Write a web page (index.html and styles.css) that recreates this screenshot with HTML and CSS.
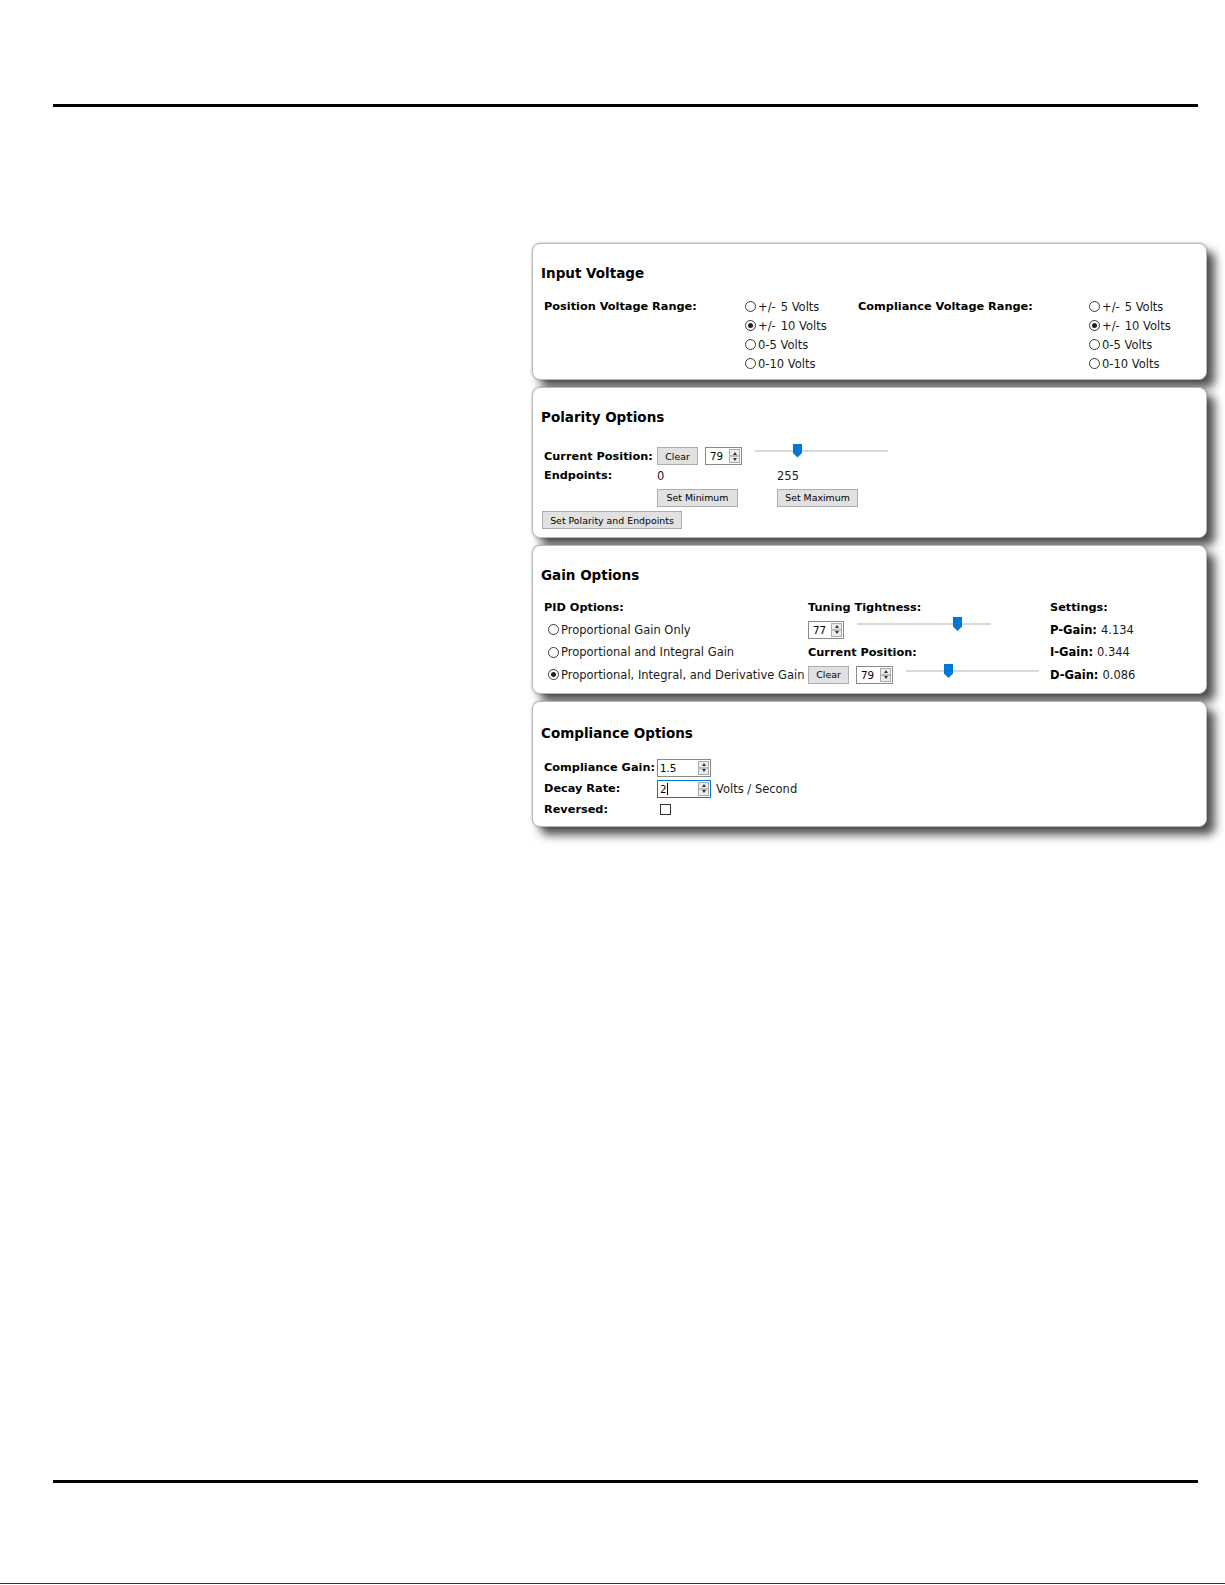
FILE: index.html
```html
<!DOCTYPE html>
<html lang="en">
<head>
    <meta charset="UTF-8">
    <meta name="viewport" content="width=device-width, initial-scale=1.0">
    <title>Controller Settings</title>
    <link rel="stylesheet" href="styles.css">
</head>
<body>
    <div class="page">
        <div class="rule"></div>

        <div class="figure">
            <!-- Input Voltage -->
            <div class="panel panel-input">
                <h2>Input Voltage</h2>
                <div class="range-grid">
                    <div class="label">Position Voltage Range:</div>
                    <div class="radios">
                        <div class="opt"><span class="radio"></span><span class="pm">+/-</span>5 Volts</div>
                        <div class="opt"><span class="radio on"></span><span class="pm">+/-</span>10 Volts</div>
                        <div class="opt"><span class="radio"></span>0-5 Volts</div>
                        <div class="opt"><span class="radio"></span>0-10 Volts</div>
                    </div>
                    <div class="label">Compliance Voltage Range:</div>
                    <div class="radios">
                        <div class="opt"><span class="radio"></span><span class="pm">+/-</span>5 Volts</div>
                        <div class="opt"><span class="radio on"></span><span class="pm">+/-</span>10 Volts</div>
                        <div class="opt"><span class="radio"></span>0-5 Volts</div>
                        <div class="opt"><span class="radio"></span>0-10 Volts</div>
                    </div>
                </div>
            </div>

            <!-- Polarity Options -->
            <div class="panel panel-polarity">
                <h2>Polarity Options</h2>
                <div class="polarity-grid">
                    <div class="label">Current Position:</div>
                    <div class="controls span2">
                        <button class="btn btn-clear">Clear</button>
                        <span class="num num-pos"><span class="val">79</span><span class="spin"><i class="up"></i><i class="down"></i></span></span>
                        <span class="slider slider-pol"><span class="thumb" style="left: 38px"></span></span>
                    </div>
                    <div class="label">Endpoints:</div>
                    <div class="text">0</div>
                    <div class="text">255</div>
                    <div></div>
                    <div><button class="btn btn-end">Set Minimum</button></div>
                    <div><button class="btn btn-end">Set Maximum</button></div>
                    <div class="span3 submit-row"><button class="btn btn-submit">Set Polarity and Endpoints</button></div>
                </div>
            </div>

            <!-- Gain Options -->
            <div class="panel panel-gain">
                <h2>Gain Options</h2>
                <div class="gain-grid">
                    <div class="label">PID Options:</div>
                    <div class="label">Tuning Tightness:</div>
                    <div class="label">Settings:</div>

                    <div class="opt pid"><span class="radio"></span>Proportional Gain Only</div>
                    <div class="controls">
                        <span class="num num-tune"><span class="val">77</span><span class="spin"><i class="up"></i><i class="down"></i></span></span>
                        <span class="slider slider-tune"><span class="thumb" style="left: 96px"></span></span>
                    </div>
                    <div class="text"><b>P-Gain:</b> 4.134</div>

                    <div class="opt pid"><span class="radio"></span>Proportional and Integral Gain</div>
                    <div class="label">Current Position:</div>
                    <div class="text"><b>I-Gain:</b> 0.344</div>

                    <div class="opt pid"><span class="radio on"></span>Proportional, Integral, and Derivative Gain</div>
                    <div class="controls">
                        <button class="btn btn-clear">Clear</button>
                        <span class="num num-pos"><span class="val">79</span><span class="spin"><i class="up"></i><i class="down"></i></span></span>
                        <span class="slider slider-cur"><span class="thumb" style="left: 38px"></span></span>
                    </div>
                    <div class="text"><b>D-Gain:</b> 0.086</div>
                </div>
            </div>

            <!-- Compliance Options -->
            <div class="panel panel-compliance">
                <h2>Compliance Options</h2>
                <div class="compliance-grid">
                    <div class="label">Compliance Gain:</div>
                    <div class="controls">
                        <span class="num num-wide"><span class="val">1.5</span><span class="spin"><i class="up"></i><i class="down"></i></span></span>
                    </div>
                    <div class="label">Decay Rate:</div>
                    <div class="controls">
                        <span class="num num-wide focused"><span class="val caret">2</span><span class="spin"><i class="up"></i><i class="down"></i></span></span>
                        <span class="text unit">Volts / Second</span>
                    </div>
                    <div class="label">Reversed:</div>
                    <div class="controls"><span class="checkbox"></span></div>
                </div>
            </div>
        </div>

        <div class="rule rule-bottom"></div>
        <div class="page-edge"></div>
    </div>
</body>
</html>
```

FILE: styles.css
```css
* { margin: 0; padding: 0; box-sizing: border-box; }
body { font-family: "DejaVu Sans", Verdana, sans-serif; background: #fff; color: #1a1a1a; }
.page { width: 1225px; padding-top: 104px; }
.rule { margin-left: 53px; width: 1145px; height: 3px; background: #000; }
.rule-bottom { margin-top: 653px; }
.page-edge { margin-top: 100px; height: 1px; background: #333; }

.figure { margin: 136px 0 0 532px; width: 675px; display: flex; flex-direction: column; gap: 7px; }
.panel { background: #fff; border: 1px solid #b8b8b8; border-radius: 8px; padding: 21px 0 0 8px; box-shadow: 0 0 3px rgba(0,0,0,0.25), 8px 8px 10px rgba(0,0,0,0.68); }
.panel h2 { font-size: 13.5px; line-height: 16px; font-weight: bold; color: #000; }
.panel-input { height: 137px; }
.panel-polarity { height: 151px; }
.panel-gain { height: 149px; }
.panel-compliance { height: 126px; }
.panel-compliance h2 { margin-top: 2px; }

.label { font-size: 11.3px; font-weight: bold; color: #000; white-space: nowrap; display: flex; align-items: center; }
.text { font-size: 11.5px; white-space: nowrap; display: flex; align-items: center; }
.text b { color: #000; margin-right: 4px; }
.controls { display: flex; align-items: center; }

/* radios */
.opt { display: flex; align-items: center; font-size: 11.5px; white-space: nowrap; }
.pm { margin-right: 5px; }
.radio { width: 11px; height: 11px; border: 1px solid #3a3a3a; border-radius: 50%; margin-right: 2px; display: flex; align-items: center; justify-content: center; background: #fff; }
.radio.on::after { content: ""; width: 5px; height: 5px; border-radius: 50%; background: #222; }

/* input voltage */
.range-grid { display: grid; grid-template-columns: 201px 113px 231px auto; margin-top: 16px; padding-left: 3px; }
.range-grid .label { height: 19px; align-self: start; }
.radios .opt { height: 19px; }

/* buttons */
.btn { font-family: "DejaVu Sans", Verdana, sans-serif; font-size: 9.4px; color: #000; background: #e1e1e1; border: 1px solid #adadad; height: 18px; padding: 0 9px; }
.btn-clear { width: 41px; padding: 0; }
.btn-end { width: 81px; padding: 0; }
.btn-submit { width: 140px; padding: 0; margin-left: -2px; }

/* number input with spinner */
.num { display: inline-flex; align-items: center; justify-content: space-between; height: 18px; border: 1px solid #8a8a8a; background: #fff; padding: 0 1px 0 4px; font-size: 10.3px; color: #000; }
.num-pos { width: 37px; margin-left: 7px; }
.num-tune { width: 36px; }
.num-wide { width: 54px; padding-left: 2px; }
.num.focused { border-color: #0078d7; }
.caret { border-right: 1px solid #000; padding-right: 0; line-height: 12px; }
.spin { width: 11px; height: 14px; border: 1px solid #ababab; background: linear-gradient(#ececec 0 45%, #bcbcbc 45% 55%, #ececec 55%); display: flex; flex-direction: column; justify-content: space-around; align-items: center; }
.spin i { width: 0; height: 0; border-left: 2.5px solid transparent; border-right: 2.5px solid transparent; }
.spin .up { border-bottom: 3px solid #333; }
.spin .down { border-top: 3px solid #333; }

/* sliders */
.slider { position: relative; display: inline-block; height: 15px; margin-bottom: 10px; }
.slider::before { content: ""; position: absolute; left: 0; right: 0; top: 6px; height: 2px; background: #d9d9d9; }
.slider .thumb { position: absolute; top: 0; width: 9px; height: 14px; background: #0078d7; clip-path: polygon(0 0, 100% 0, 100% 68%, 50% 100%, 0 68%); }
.slider-pol { width: 133px; margin-left: 13px; }
.slider-tune { width: 134px; margin-left: 13px; }
.slider-cur { width: 133px; margin-left: 13px; margin-bottom: 6px; }

/* polarity */
.polarity-grid { display: grid; grid-template-columns: 113px 120px auto; grid-template-rows: 18px 21px 18px 25px; margin-top: 22px; padding-left: 3px; }
.span2 { grid-column: span 2; }
.span3 { grid-column: span 3; }
.submit-row { display: flex; align-items: flex-end; }

/* gain */
.gain-grid { display: grid; grid-template-columns: 264px 242px auto; grid-template-rows: 22px 23px 22px 23px; margin-top: 13px; padding-left: 3px; }
.opt.pid { padding-left: 4px; }

/* compliance */
.compliance-grid { display: grid; grid-template-columns: 113px auto; grid-template-rows: 21px 21px 21px; margin-top: 16px; padding-left: 3px; }
.unit { margin-left: 5px; }
.checkbox { width: 11px; height: 11px; border: 1px solid #333; background: #fff; margin-left: 3px; }
```
